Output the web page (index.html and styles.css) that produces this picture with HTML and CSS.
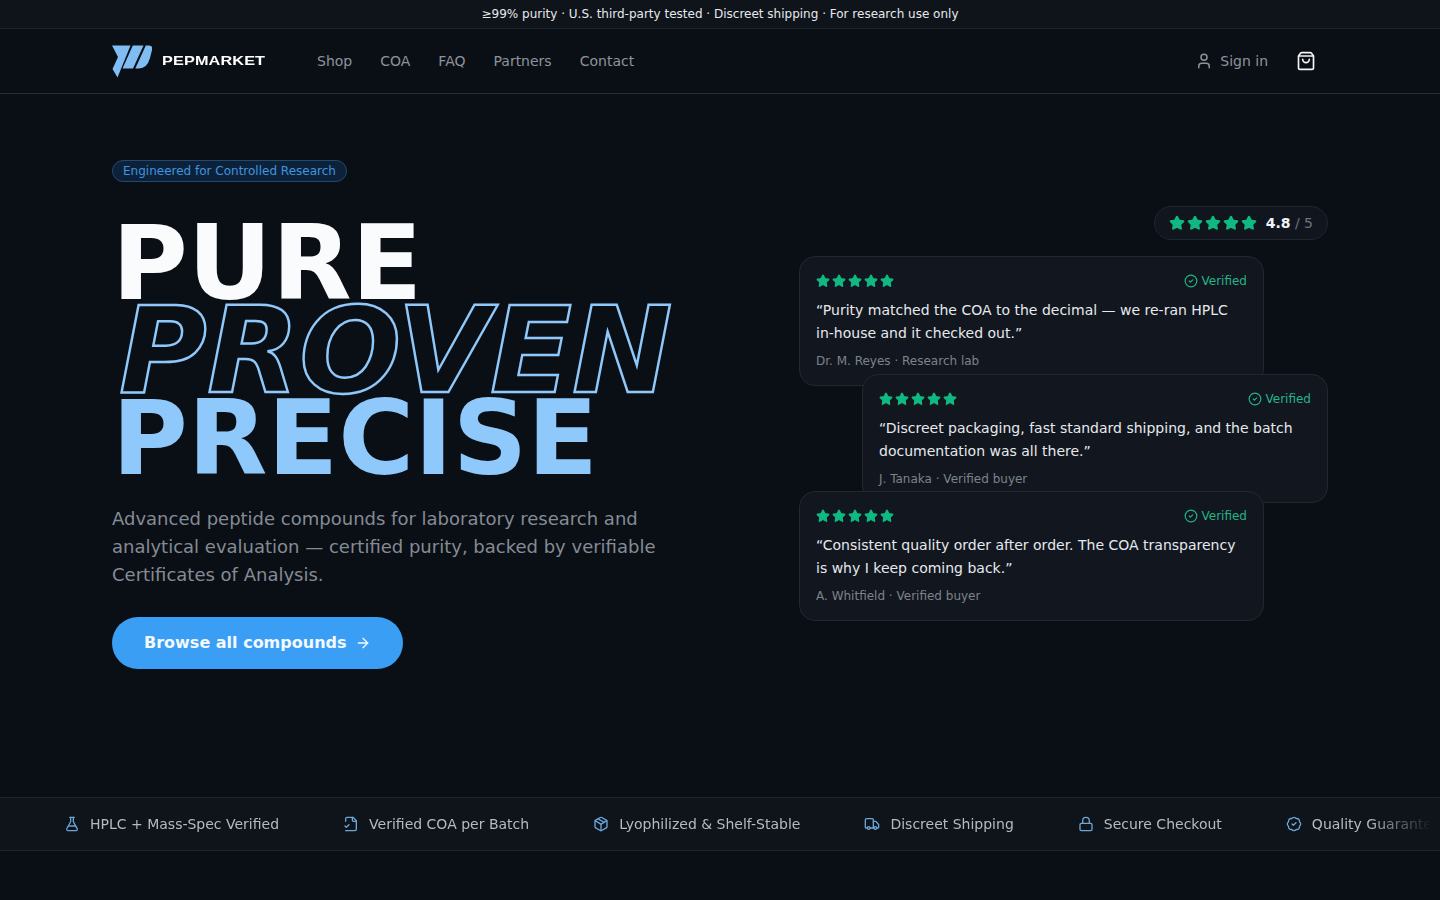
FILE: index.html
```html
<!DOCTYPE html>
<html lang="en">
<head>
    <meta charset="UTF-8">
    <meta name="viewport" content="width=device-width, initial-scale=1.0">
    <title>PepMarket</title>
    <link rel="stylesheet" href="styles.css">
</head>
<body>
    <!-- shared icons -->
    <svg class="icon-defs" aria-hidden="true">
        <symbol id="i-star" viewBox="0 0 24 24"><path d="M11.525 2.295a.53.53 0 0 1 .95 0l2.31 4.679a2.123 2.123 0 0 0 1.595 1.16l5.166.756a.53.53 0 0 1 .294.904l-3.736 3.638a2.123 2.123 0 0 0-.611 1.878l.882 5.14a.53.53 0 0 1-.771.56l-4.618-2.428a2.122 2.122 0 0 0-1.973 0L6.396 21.01a.53.53 0 0 1-.77-.56l.881-5.139a2.122 2.122 0 0 0-.611-1.879L2.16 9.795a.53.53 0 0 1 .294-.906l5.165-.755a2.122 2.122 0 0 0 1.597-1.16z"/></symbol>
        <symbol id="i-check" viewBox="0 0 24 24"><circle cx="12" cy="12" r="10"/><path d="m9 12 2 2 4-4"/></symbol>
    </svg>

    <div class="topbar">≥99% purity · U.S. third-party tested · Discreet shipping · For research use only</div>

    <header class="site-header">
        <div class="container header-row">
            <a class="brand" href="#">
                <svg class="brand-mark" viewBox="0 0 40 33">
                    <path d="M0 0.5H18.5L5.5 32.5L0.5 24L6 12Z"/>
                    <path d="M20.8 0.5H31.5L21 23.5H10.5Z"/>
                    <path d="M33.8 0.5H37Q41 0.5 40 5L38 13Q35 23.5 27 23.5H23.3Z"/>
                </svg>
                <span class="brand-name">PEPMARKET</span>
            </a>
            <nav class="main-nav">
                <a href="#">Shop</a>
                <a href="#">COA</a>
                <a href="#">FAQ</a>
                <a href="#">Partners</a>
                <a href="#">Contact</a>
            </nav>
            <div class="header-actions">
                <a class="sign-in" href="#">
                    <svg class="line-icon" width="18" height="18" viewBox="0 0 24 24"><path d="M19 21v-2a4 4 0 0 0-4-4H9a4 4 0 0 0-4 4v2"/><circle cx="12" cy="7" r="4"/></svg>
                    Sign in
                </a>
                <a class="cart" href="#">
                    <svg class="line-icon" width="20" height="20" viewBox="0 0 24 24"><path d="M16 10a4 4 0 0 1-8 0"/><path d="M3.103 6.034h17.794"/><path d="M3.4 5.467a2 2 0 0 0-.4 1.2V20a2 2 0 0 0 2 2h14a2 2 0 0 0 2-2V6.667a2 2 0 0 0-.4-1.2l-2-2.667A2 2 0 0 0 17 2H7a2 2 0 0 0-1.6.8z"/></svg>
                </a>
            </div>
        </div>
    </header>

    <main class="container hero">
        <section class="hero-copy">
            <span class="hero-badge">Engineered for Controlled Research</span>
            <h1 class="hero-title">
                <span class="line-pure">PURE</span>
                <span class="line-proven">PROVEN</span>
                <span class="line-precise">PRECISE</span>
            </h1>
            <p class="hero-text">Advanced peptide compounds for laboratory research and analytical evaluation — certified purity, backed by verifiable Certificates of Analysis.</p>
            <a class="cta" href="#">
                Browse all compounds
                <svg class="line-icon" width="16" height="16" viewBox="0 0 24 24"><path d="M5 12h14"/><path d="m12 5 7 7-7 7"/></svg>
            </a>
        </section>

        <section class="reviews">
            <div class="rating-pill">
                <span class="stars stars-large">
                    <svg><use href="#i-star"/></svg><svg><use href="#i-star"/></svg><svg><use href="#i-star"/></svg><svg><use href="#i-star"/></svg><svg><use href="#i-star"/></svg>
                </span>
                <span class="rating-value"><b>4.8</b> / 5</span>
            </div>

            <article class="review-card">
                <div class="review-top">
                    <span class="stars">
                        <svg><use href="#i-star"/></svg><svg><use href="#i-star"/></svg><svg><use href="#i-star"/></svg><svg><use href="#i-star"/></svg><svg><use href="#i-star"/></svg>
                    </span>
                    <span class="verified"><svg class="line-icon"><use href="#i-check"/></svg>Verified</span>
                </div>
                <p class="review-quote">“Purity matched the COA to the decimal — we re-ran HPLC in-house and it checked out.”</p>
                <p class="review-author">Dr. M. Reyes · Research lab</p>
            </article>

            <article class="review-card review-card-right">
                <div class="review-top">
                    <span class="stars">
                        <svg><use href="#i-star"/></svg><svg><use href="#i-star"/></svg><svg><use href="#i-star"/></svg><svg><use href="#i-star"/></svg><svg><use href="#i-star"/></svg>
                    </span>
                    <span class="verified"><svg class="line-icon"><use href="#i-check"/></svg>Verified</span>
                </div>
                <p class="review-quote">“Discreet packaging, fast standard shipping, and the batch documentation was all there.”</p>
                <p class="review-author">J. Tanaka · Verified buyer</p>
            </article>

            <article class="review-card">
                <div class="review-top">
                    <span class="stars">
                        <svg><use href="#i-star"/></svg><svg><use href="#i-star"/></svg><svg><use href="#i-star"/></svg><svg><use href="#i-star"/></svg><svg><use href="#i-star"/></svg>
                    </span>
                    <span class="verified"><svg class="line-icon"><use href="#i-check"/></svg>Verified</span>
                </div>
                <p class="review-quote">“Consistent quality order after order. The COA transparency is why I keep coming back.”</p>
                <p class="review-author">A. Whitfield · Verified buyer</p>
            </article>
        </section>
    </main>

    <div class="trust-strip">
        <ul class="trust-track">
            <li>
                <svg class="line-icon" width="16" height="16" viewBox="0 0 24 24"><path d="M14 2v6a2 2 0 0 0 .245.96l5.51 10.08A2 2 0 0 1 18 22H6a2 2 0 0 1-1.755-2.96l5.51-10.08A2 2 0 0 0 10 8V2"/><path d="M6.453 15h11.094"/><path d="M8.5 2h7"/></svg>
                HPLC + Mass-Spec Verified
            </li>
            <li>
                <svg class="line-icon" width="16" height="16" viewBox="0 0 24 24"><path d="M4 22h14a2 2 0 0 0 2-2V7l-5-5H6a2 2 0 0 0-2 2v4"/><path d="M14 2v4a2 2 0 0 0 2 2h4"/><path d="m3 15 2 2 4-4"/></svg>
                Verified COA per Batch
            </li>
            <li>
                <svg class="line-icon" width="16" height="16" viewBox="0 0 24 24"><path d="M11 21.73a2 2 0 0 0 2 0l7-4A2 2 0 0 0 21 16V8a2 2 0 0 0-1-1.73l-7-4a2 2 0 0 0-2 0l-7 4A2 2 0 0 0 3 8v8a2 2 0 0 0 1 1.73z"/><path d="M12 22V12"/><path d="m3.3 7 7.703 4.734a2 2 0 0 0 1.994 0L20.7 7"/><path d="m7.5 4.27 9 5.15"/></svg>
                Lyophilized &amp; Shelf-Stable
            </li>
            <li>
                <svg class="line-icon" width="16" height="16" viewBox="0 0 24 24"><path d="M14 18V6a2 2 0 0 0-2-2H4a2 2 0 0 0-2 2v11a1 1 0 0 0 1 1h2"/><path d="M15 18H9"/><path d="M19 18h2a1 1 0 0 0 1-1v-3.65a1 1 0 0 0-.22-.624l-3.48-4.35A1 1 0 0 0 17.52 8H14"/><circle cx="17" cy="18" r="2"/><circle cx="7" cy="18" r="2"/></svg>
                Discreet Shipping
            </li>
            <li>
                <svg class="line-icon" width="16" height="16" viewBox="0 0 24 24"><rect width="18" height="11" x="3" y="11" rx="2" ry="2"/><path d="M7 11V7a5 5 0 0 1 10 0v4"/></svg>
                Secure Checkout
            </li>
            <li>
                <svg class="line-icon" width="16" height="16" viewBox="0 0 24 24"><path d="M3.85 8.62a4 4 0 0 1 4.78-4.77 4 4 0 0 1 6.74 0 4 4 0 0 1 4.78 4.78 4 4 0 0 1 0 6.74 4 4 0 0 1-4.77 4.78 4 4 0 0 1-6.75 0 4 4 0 0 1-4.78-4.77 4 4 0 0 1 0-6.76Z"/><path d="m9 12 2 2 4-4"/></svg>
                Quality Guarantee
            </li>
        </ul>
    </div>
</body>
</html>
```

FILE: styles.css
```css
* {
    box-sizing: border-box;
}

body {
    margin: 0;
    min-height: 900px;
    overflow: hidden;
    background: #0a0f16;
    color: #fff;
    font-family: "DejaVu Sans", sans-serif;
}

a {
    color: inherit;
    text-decoration: none;
}

.icon-defs {
    display: none;
}

.line-icon {
    fill: none;
    stroke: currentColor;
    stroke-width: 2;
    stroke-linecap: round;
    stroke-linejoin: round;
    flex-shrink: 0;
}

.container {
    max-width: 1280px;
    margin: 0 auto;
    padding: 0 32px;
}

/* top bars */
.topbar {
    height: 29px;
    padding-top: 7px;
    background: #0f141b;
    border-bottom: 1px solid #1e242c;
    text-align: center;
    font-size: 12px;
    line-height: 15px;
    color: #e6e9ed;
}

.site-header {
    border-bottom: 1px solid #2a2f37;
}

.header-row {
    display: flex;
    align-items: center;
    height: 64px;
}

.brand {
    display: flex;
    align-items: center;
    gap: 10px;
    width: 205px;
}

.brand-mark {
    width: 40px;
    height: 33px;
    fill: #7fbdf2;
}

.brand-name {
    display: inline-block;
    margin-top: -2px;
    font-family: "Liberation Sans", sans-serif;
    font-size: 13px;
    font-weight: 700;
    letter-spacing: 0.1px;
    color: #fff;
    transform: scaleX(1.25);
    transform-origin: left center;
}

.main-nav {
    display: flex;
    gap: 28px;
    font-size: 14px;
    color: #8d939c;
}

.header-actions {
    display: flex;
    align-items: center;
    gap: 28px;
    margin-left: auto;
    padding-right: 12px;
}

.sign-in {
    display: flex;
    align-items: center;
    gap: 7px;
    font-size: 14px;
    color: #8d939c;
}

.cart {
    display: flex;
    color: #f2f4f6;
}

/* hero */
.hero {
    display: grid;
    grid-template-columns: 1fr 529px;
    align-items: center;
    height: 703px;
    padding-bottom: 62px;
}

.hero-badge {
    display: inline-block;
    padding: 2px 10px;
    border: 1px solid #1f4a73;
    border-radius: 999px;
    background: #0d2238;
    color: #3f95e0;
    font-size: 12px;
    line-height: 16px;
}

.hero-title {
    display: flex;
    flex-direction: column;
    margin: 36px 0 23px;
    font-size: 103.5px;
    line-height: 88px;
    font-weight: 700;
}

.hero-title span {
    display: block;
}

.line-pure {
    color: #fafbfc;
    line-height: 90px;
}

.line-proven {
    margin-left: 7px;
    color: transparent;
    font-size: 120px;
    line-height: 86px;
    font-style: italic;
    -webkit-text-stroke: 2.4px #8fc8fa;
}

.line-precise {
    color: #8fc8fa;
}

.hero-text {
    width: 560px;
    margin: 0 0 28px;
    font-size: 18px;
    line-height: 28px;
    color: #858b94;
}

.cta {
    display: inline-flex;
    align-items: center;
    gap: 8px;
    height: 52px;
    padding: 0 32px 1px;
    border-radius: 999px;
    background: #3b9ef5;
    color: #f3f9ff;
    font-size: 16px;
    font-weight: 700;
}

/* reviews column */
.reviews {
    display: flex;
    flex-direction: column;
    margin-bottom: 2px;
}

.rating-pill {
    display: flex;
    align-items: center;
    gap: 9px;
    align-self: flex-end;
    height: 34px;
    margin-bottom: 16px;
    padding: 0 14px;
    border: 1px solid #20262e;
    border-radius: 999px;
    background: #11161e;
}

.stars {
    display: flex;
    gap: 2px;
    fill: #10b981;
    stroke: #10b981;
    stroke-width: 2;
    stroke-linejoin: round;
}

.stars svg {
    width: 14px;
    height: 14px;
}

.stars-large svg {
    width: 16px;
    height: 16px;
}

.rating-value {
    font-size: 14px;
    color: #6d737c;
}

.rating-value b {
    color: #f1f3f5;
}

.review-card {
    width: 465px;
    height: 129.5px;
    padding: 16px;
    border: 1px solid #23282f;
    border-radius: 16px;
    background: #12171f;
}

.review-card + .review-card {
    margin-top: -12px;
}

.review-card-right {
    align-self: flex-end;
    width: 466px;
}

.review-top {
    display: flex;
    align-items: center;
    justify-content: space-between;
    height: 16px;
}

.verified {
    display: flex;
    align-items: center;
    gap: 4px;
    font-size: 12px;
    color: #24b488;
}

.verified svg {
    width: 14px;
    height: 14px;
}

.review-quote {
    margin: 10px 0 8px;
    font-size: 14px;
    line-height: 23px;
    color: #e6e9ed;
}

.review-author {
    margin: 0;
    font-size: 12px;
    line-height: 16px;
    color: #7d838c;
}

/* trust strip */
.trust-strip {
    height: 54px;
    overflow: hidden;
    background: #0f141b;
    border-top: 1px solid #1e242c;
    border-bottom: 1px solid #1e242c;
}

.trust-track {
    display: flex;
    align-items: center;
    gap: 64px;
    height: 100%;
    margin: 0;
    padding: 0 0 0 64px;
    list-style: none;
    white-space: nowrap;
    font-size: 14px;
    color: #b6bbc2;
    -webkit-mask-image: linear-gradient(90deg, transparent 8px, #000 72px, #000 calc(100% - 72px), transparent calc(100% - 8px));
    mask-image: linear-gradient(90deg, transparent 8px, #000 72px, #000 calc(100% - 72px), transparent calc(100% - 8px));
}

.trust-track li {
    display: flex;
    align-items: center;
    gap: 10px;
}

.trust-track svg {
    color: #6aa6d8;
}
```
